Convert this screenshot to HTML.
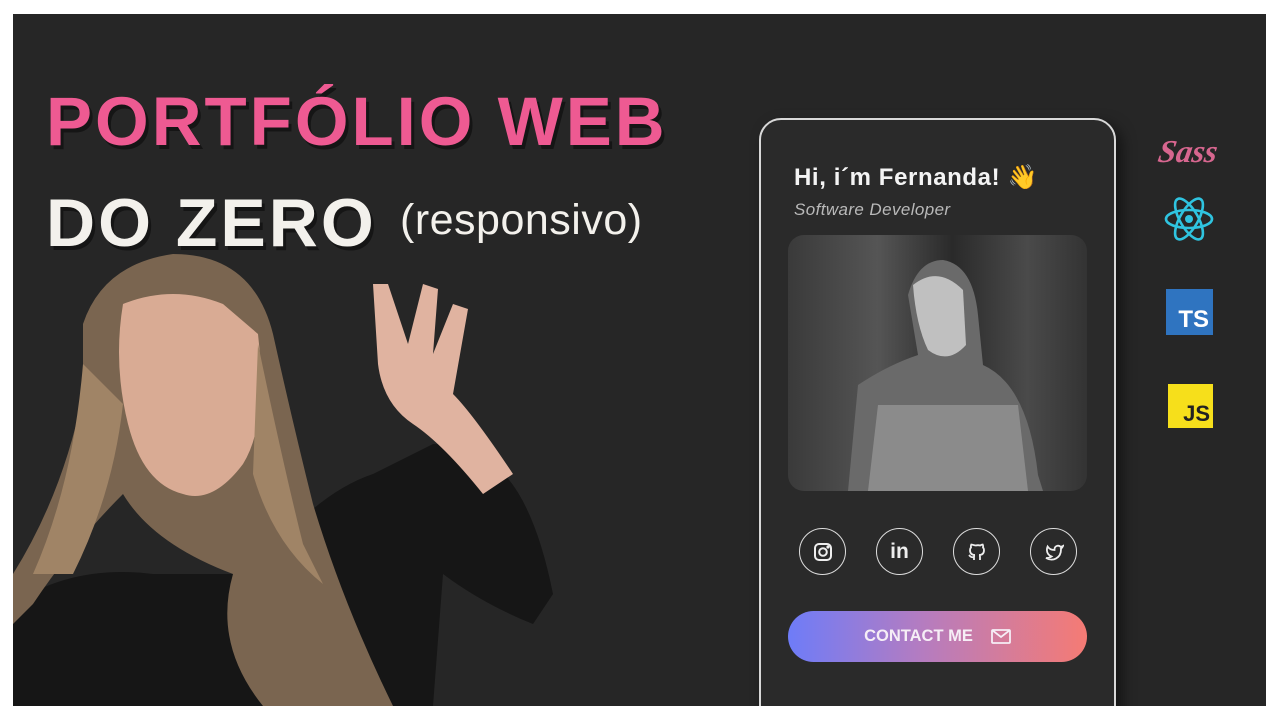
<!DOCTYPE html>
<html style="overflow:hidden"><head><meta charset="utf-8"><style>
*{margin:0;padding:0;box-sizing:border-box}
body{width:1280px;height:720px;background:#fff;position:relative;overflow:hidden;font-family:"Liberation Sans",sans-serif}
#bg{position:absolute;left:13px;top:14px;width:1253px;height:692px;background:#262626;overflow:hidden}
.t1{position:absolute;left:33px;top:68px;font-size:69px;font-weight:900;color:#ee5a92;letter-spacing:3px;text-shadow:3px 4px 0 #151515;white-space:nowrap}
.t2{position:absolute;left:33px;top:170px;font-size:68px;font-weight:900;color:#f3f1ec;letter-spacing:3px;text-shadow:3px 4px 0 #151515;white-space:nowrap}
.t3{position:absolute;left:387px;top:182px;font-size:43px;color:#f3f1ec;white-space:nowrap;letter-spacing:.5px}
.card{position:absolute;left:746px;top:104px;width:357px;height:620px;border:2px solid #d8d8d8;border-radius:22px;background:#2a2a2a;box-shadow:6px 6px 14px rgba(0,0,0,.5)}
.name{position:absolute;left:33px;top:37px;font-size:24px;font-weight:bold;color:#f4f4f4;white-space:nowrap;letter-spacing:.6px}
.sub{position:absolute;left:33px;top:80px;font-size:17px;font-style:italic;color:#b9b9b9;letter-spacing:.4px}
.photo{position:absolute;left:27px;top:115px;width:299px;height:256px;border-radius:16px;background:linear-gradient(90deg,#3a3a3a,#555 30%,#2a2a2a 55%,#4a4a4a 80%,#333);overflow:hidden}
.soc{position:absolute;top:408px;width:47px;height:47px;border:1.5px solid #ddd;border-radius:50%;display:flex;align-items:center;justify-content:center;color:#eee}
.btn{position:absolute;left:27px;top:491px;width:299px;height:51px;border-radius:26px;background:linear-gradient(90deg,#6e7cf8,#b57cc0 45%,#f57b74);color:#f6eef6;font-weight:bold;font-size:16.5px;display:flex;align-items:center;justify-content:center;gap:18px}
</style></head><body>
<div id="bg">
<div class="t1">PORTFÓLIO WEB</div>
<div class="t2">DO ZERO</div>
<div class="t3">(responsivo)</div>

<svg style="position:absolute;left:0;top:230px" width="620" height="462" viewBox="0 0 620 462">
<path d="M0 360 Q60 320 140 330 L240 330 Q300 250 360 230 L420 200 Q460 200 480 220 Q520 250 540 350 L520 380 Q470 360 430 330 L420 462 L0 462Z" fill="#161616"/>
<path d="M70 80 Q90 20 160 10 Q240 10 260 90 Q280 180 300 260 Q330 360 380 462 L250 462 Q200 400 220 330 Q140 300 110 250 Q60 300 20 360 L0 380 L0 330 Q50 250 70 150Z" fill="#7a6550"/>
<path d="M110 60 Q160 40 210 60 L245 90 Q255 180 230 220 Q200 260 170 250 Q130 240 115 180 Q100 120 110 60Z" fill="#d9ab94"/>
<path d="M70 120 Q60 240 20 330 L60 330 Q100 250 110 160Z" fill="#a08466"/>
<path d="M245 100 Q270 220 290 300 L310 340 Q260 300 240 230Z" fill="#a08466"/>
<path d="M360 40 L375 40 L395 100 L410 40 L425 45 L420 110 L440 60 L455 65 L440 150 Q460 170 500 230 L470 250 Q430 200 400 180 Q370 160 365 120Z" fill="#e0b3a0"/>
</svg>

<svg style="position:absolute;left:1143px;top:108px" width="70" height="50" viewBox="0 0 70 50"><text x="2" y="40" font-family="Liberation Serif,serif" font-style="italic" font-weight="bold" font-size="32" fill="#d7668f" transform="skewX(-10) translate(6 0)">Sass</text></svg>
<svg style="position:absolute;left:1150px;top:181px" width="52" height="48" viewBox="-26 -24 52 48" fill="none" stroke="#2fc4e0" stroke-width="2.6"><ellipse rx="23" ry="9"/><ellipse rx="23" ry="9" transform="rotate(60)"/><ellipse rx="23" ry="9" transform="rotate(120)"/><circle r="4" fill="#2fc4e0" stroke="none"/></svg>
<div style="position:absolute;left:1153px;top:275px;width:47px;height:46px;background:#2f74c0;color:#fff;font-weight:bold;font-size:24px;display:flex;align-items:flex-end;justify-content:flex-end;padding:0 4px 1px 0">TS</div>
<div style="position:absolute;left:1155px;top:370px;width:45px;height:44px;background:#f6df1b;color:#222;font-weight:bold;font-size:22px;display:flex;align-items:flex-end;justify-content:flex-end;padding:0 3px 1px 0">JS</div>

<div class="card">
<div class="name">Hi, i´m Fernanda! <span style="font-family:'Noto Sans CJK JP',sans-serif">👋</span></div>
<div class="sub">Software Developer</div>
<div class="photo">
<svg width="299" height="256" viewBox="0 0 299 256"><path d="M60 256 L70 150 Q100 130 130 120 L120 60 Q130 25 155 25 Q185 30 190 80 L195 130 Q240 150 250 240 L255 256Z" fill="#6a6a6a"/><path d="M125 50 Q150 30 175 55 L178 110 Q160 130 140 115 Q128 90 125 50Z" fill="#c0c0c0"/><path d="M90 170 L230 170 L240 256 L80 256Z" fill="#9a9a9a" opacity=".7"/></svg>
</div>
<div class="soc" style="left:38px"><svg width="20" height="20" viewBox="0 0 20 20" fill="none" stroke="#eee" stroke-width="2"><rect x="2" y="2" width="16" height="16" rx="4"/><circle cx="10" cy="10" r="3.8"/><circle cx="15" cy="5" r=".6" fill="#eee"/></svg></div>
<div class="soc" style="left:115px;font-weight:bold;font-size:21px">in</div>
<div class="soc" style="left:192px"><svg width="20" height="20" viewBox="0 0 20 20" fill="none" stroke="#eee" stroke-width="1.8"><path d="M7 18v-3c-3 1-4-1-5-2M13 18v-3c0-1-.5-2-1-2 3 0 5-1.5 5-5 0-1-.4-2-1-2.5 .2-1 .2-2-.3-3-1 0-2 .7-2.5 1a8 8 0 0 0-4.4 0C6.3 3.2 5.3 2.5 4.3 2.5c-.5 1-.5 2-.3 3-.6.5-1 1.5-1 2.5 0 3.5 2 5 5 5-.5 0-1 1-1 2"/></svg></div>
<div class="soc" style="left:269px"><svg width="20" height="20" viewBox="0 0 20 20" fill="none" stroke="#eee" stroke-width="1.8"><path d="M19 4c-.8.5-1.6.7-2.4.9A3.5 3.5 0 0 0 10.5 7v1A8 8 0 0 1 3.6 4.5S.5 11.5 7.5 14.5A9 9 0 0 1 2 16c7 4 15 0 15-8.5 0-.2 0-.5-.1-.7C17.9 6 18.6 5 19 4z"/></svg></div>
<div class="btn">CONTACT ME <svg width="20" height="15" viewBox="0 0 20 15" fill="none" stroke="#f6eef6" stroke-width="1.8"><rect x="1" y="1" width="18" height="13" rx="1"/><path d="M1 1l9 7 9-7"/></svg></div>
</div>
</div>
</body></html>
